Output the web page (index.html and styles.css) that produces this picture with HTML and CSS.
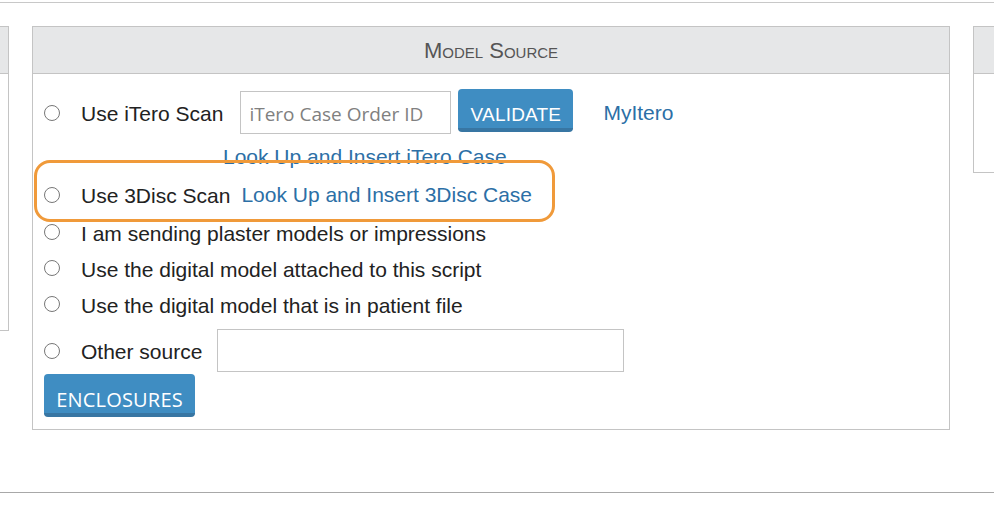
FILE: index.html
```html
<!DOCTYPE html>
<html lang="en">
<head>
  <meta charset="UTF-8" />
  <meta name="viewport" content="width=device-width, initial-scale=1.0"/>
  <title>Model Source</title>
  <link rel="stylesheet" href="styles.css">
</head>
<body>
  <div class="top-rule"></div>

  <div class="columns">
    <section class="panel side-left">
      <div class="panel-head"></div>
    </section>

    <section class="panel main-panel">
      <div class="panel-head">Model Source</div>
      <div class="panel-body">
        <div class="option row-itero">
          <span class="radio"></span>
          <span class="label">Use iTero Scan</span>
          <input class="field order-id" type="text" placeholder="iTero Case Order ID">
          <button class="btn validate">Validate</button>
          <a class="link myitero" href="#">MyItero</a>
        </div>
        <div class="lookup">
          <a class="link" href="#">Look Up and Insert iTero Case</a>
        </div>
        <div class="option row-3disc">
          <span class="radio"></span>
          <span class="label">Use 3Disc Scan</span>
          <a class="link" href="#">Look Up and Insert 3Disc Case</a>
        </div>
        <div class="option">
          <span class="radio"></span>
          <span class="label">I am sending plaster models or impressions</span>
        </div>
        <div class="option">
          <span class="radio"></span>
          <span class="label">Use the digital model attached to this script</span>
        </div>
        <div class="option">
          <span class="radio"></span>
          <span class="label">Use the digital model that is in patient file</span>
        </div>
        <div class="option row-other">
          <span class="radio"></span>
          <span class="label">Other source</span>
          <input class="field other" type="text">
        </div>
        <button class="btn enclosures">Enclosures</button>
      </div>
      <div class="highlight"></div>
    </section>

    <section class="panel side-right">
      <div class="panel-head"></div>
    </section>
  </div>

  <div class="bottom-rule"></div>
</body>
</html>
```

FILE: styles.css
```css
body {
  margin: 0;
  font-family: 'Liberation Sans', Arial, sans-serif;
  color: #222;
  background: #fff;
  overflow: hidden;
}

.top-rule {
  height: 1px;
  margin-top: 2px;
  background: #c8c8c8;
}

.columns {
  display: flex;
  align-items: flex-start;
  gap: 23px;
  margin-top: 23px;
  margin-left: -291px;
}

.panel {
  flex: none;
  border: 1px solid #c4c4c4;
  background: #fff;
}

.panel-head {
  height: 46px;
  background: #e6e7e8;
  border-bottom: 1px solid #c4c4c4;
  color: #555;
  font-size: 22px;
  font-variant: small-caps;
  line-height: 48px;
  text-align: center;
}

.side-left {
  width: 298px;
  height: 303px;
}

.side-right {
  width: 300px;
  height: 145px;
}

.main-panel {
  position: relative;
  width: 916px;
  height: 402px;
}

.panel-body {
  padding: 15px 0 0 11px;
}

.option {
  display: flex;
  align-items: center;
  height: 36px;
  font-size: 21px;
}

.option .label {
  padding-top: 3px;
}

.radio {
  box-sizing: border-box;
  width: 16px;
  height: 16px;
  border: 1px solid #777;
  border-radius: 50%;
  margin-right: 21px;
  flex: none;
}

.row-itero {
  height: 47px;
}

.row-itero .label {
  margin-right: 17px;
}

.field {
  box-sizing: border-box;
  height: 43px;
  border: 1px solid #c4c4c4;
  padding: 2px 8px 0;
  font-family: 'Open Sans', sans-serif;
  font-size: 19px;
  color: #555;
}

.field::placeholder {
  color: #808080;
}

.order-id {
  width: 211px;
  margin-right: 7px;
}

.btn {
  box-sizing: border-box;
  border: none;
  border-bottom: 4px solid #3876a3;
  border-radius: 4px;
  background: #3f8dc2;
  color: #fff;
  text-transform: uppercase;
  cursor: pointer;
}

.validate {
  width: 115px;
  height: 43px;
  margin-top: -5px;
  padding-top: 15px;
  font-family: 'Liberation Sans', Arial, sans-serif;
  font-size: 19px;
  letter-spacing: 0.2px;
}

.link {
  color: #2c6fa6;
  text-decoration: none;
  font-size: 21px;
}

.myitero {
  margin-left: 30px;
}

.lookup {
  height: 39px;
  line-height: 41px;
  padding-left: 179px;
}

.row-3disc {
  height: 39px;
}

.row-3disc .label {
  margin-right: 11px;
}

.row-other {
  height: 43px;
  margin-top: 7px;
}

.row-other .label {
  margin-right: 15px;
}

.other {
  width: 407px;
}

.enclosures {
  display: block;
  width: 151px;
  height: 43px;
  margin-top: 2px;
  padding: 11px 0 0;
  font-family: 'Open Sans', sans-serif;
  font-size: 20px;
  letter-spacing: 0.2px;
}

.highlight {
  position: absolute;
  left: 1px;
  top: 133px;
  width: 515px;
  height: 56px;
  border: 3px solid #f09a3a;
  border-radius: 16px;
  pointer-events: none;
}

.bottom-rule {
  height: 1px;
  margin-top: 62px;
  background: #a8a8a8;
}
```
